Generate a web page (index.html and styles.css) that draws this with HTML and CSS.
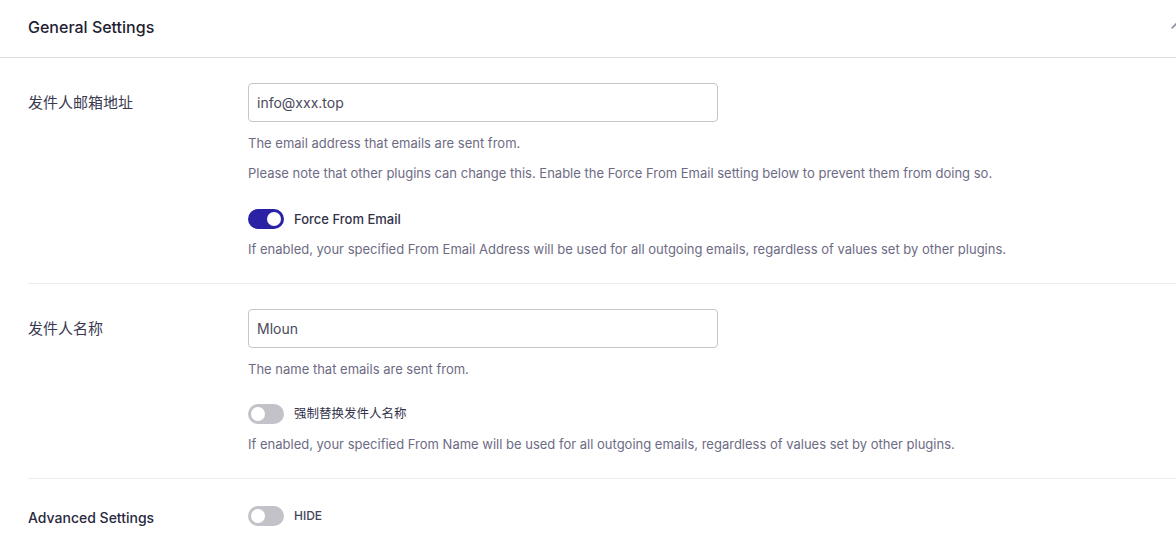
FILE: index.html
```html
<!DOCTYPE html>
<html lang="zh-CN">
<head>
  <meta charset="UTF-8" />
  <meta name="viewport" content="width=device-width, initial-scale=1.0" />
  <title>General Settings</title>
  <link rel="stylesheet" href="styles.css">
</head>
<body>
  <div class="panel">
    <header>
      <h2>General Settings</h2>
      <svg class="chevron" width="14" height="14" viewBox="0 0 14 14">
        <path d="M2 9 L7 4 L12 9" fill="none" stroke="#8c89a3" stroke-width="1.6" stroke-linecap="round"/>
      </svg>
    </header>

    <div class="row">
      <label class="row-label">发件人邮箱地址</label>
      <div class="row-field">
        <input type="text" value="info@xxx.top">
        <p class="desc">The email address that emails are sent from.</p>
        <p class="desc">Please note that other plugins can change this. Enable the Force From Email setting below to prevent them from doing so.</p>
        <div class="switch-line">
          <span class="toggle on"></span>
          <span class="switch-text">Force From Email</span>
        </div>
        <p class="desc">If enabled, your specified From Email Address will be used for all outgoing emails, regardless of values set by other plugins.</p>
      </div>
    </div>

    <div class="row">
      <label class="row-label">发件人名称</label>
      <div class="row-field">
        <input type="text" value="Mloun">
        <p class="desc">The name that emails are sent from.</p>
        <div class="switch-line tight">
          <span class="toggle"></span>
          <span class="switch-text light">强制替换发件人名称</span>
        </div>
        <p class="desc">If enabled, your specified From Name will be used for all outgoing emails, regardless of values set by other plugins.</p>
      </div>
    </div>

    <div class="row last">
      <label class="row-label strong">Advanced Settings</label>
      <div class="row-field">
        <div class="switch-line first">
          <span class="toggle"></span>
          <span class="switch-text small">HIDE</span>
        </div>
      </div>
    </div>
  </div>
</body>
</html>
```

FILE: styles.css
```css
body {
  margin: 0;
  background: #fff;
  font-family: Inter, "Noto Sans CJK SC", sans-serif;
  color: #3b3a4d;
  overflow: hidden;
}
header {
  height: 57px;
  border-bottom: 1px solid #dddde2;
  display: flex;
  justify-content: space-between;
  align-items: center;
  padding-left: 28px;
}
header h2 {
  margin: 0;
  font-size: 16px;
  font-weight: 500;
  color: #1f1e33;
  position: relative;
  top: -2px;
}
.chevron {
  margin-right: -8px;
  position: relative;
  top: -3px;
}
.row {
  display: flex;
  margin-left: 28px;
  padding: 25px 0 24px;
  border-bottom: 1px solid #ececf0;
}
.row.last {
  border-bottom: none;
  padding-top: 27px;
}
.row-label {
  width: 220px;
  flex-shrink: 0;
  font-size: 15px;
  line-height: 20px;
  padding-top: 10px;
  color: #3a3950;
}
.row-label.strong {
  font-size: 14px;
  font-weight: 500;
  padding-top: 2px;
  color: #2a2940;
}
.row-field input {
  width: 470px;
  height: 39px;
  box-sizing: border-box;
  border: 1px solid #c5c5cc;
  border-radius: 4px;
  padding: 0 8px;
  font-family: Inter, sans-serif;
  font-size: 14px;
  color: #4a495c;
  margin-bottom: 1px;
}
.desc {
  margin: 10px 0 0;
  font-size: 13px;
  line-height: 20px;
  color: #6d6b84;
}
.switch-line {
  display: flex;
  align-items: center;
  gap: 10px;
  margin-top: 26px;
  height: 20px;
}
.switch-line.tight {
  margin-top: 25px;
}
.switch-line.first {
  margin-top: 0;
}
.toggle {
  width: 36px;
  height: 20px;
  border-radius: 10px;
  background: #c3c2c9;
  position: relative;
  flex-shrink: 0;
}
.toggle::after {
  content: "";
  position: absolute;
  top: 3px;
  left: 3px;
  width: 14px;
  height: 14px;
  border-radius: 50%;
  background: #fff;
}
.toggle.on {
  background: #2a21a4;
}
.toggle.on::after {
  left: 19px;
}
.switch-text {
  font-size: 13px;
  line-height: 20px;
  font-weight: 500;
  color: #33324a;
}
.switch-text.light {
  font-size: 12.5px;
  font-weight: 400;
}
.switch-text.small {
  font-size: 12px;
  color: #45445a;
}
```
